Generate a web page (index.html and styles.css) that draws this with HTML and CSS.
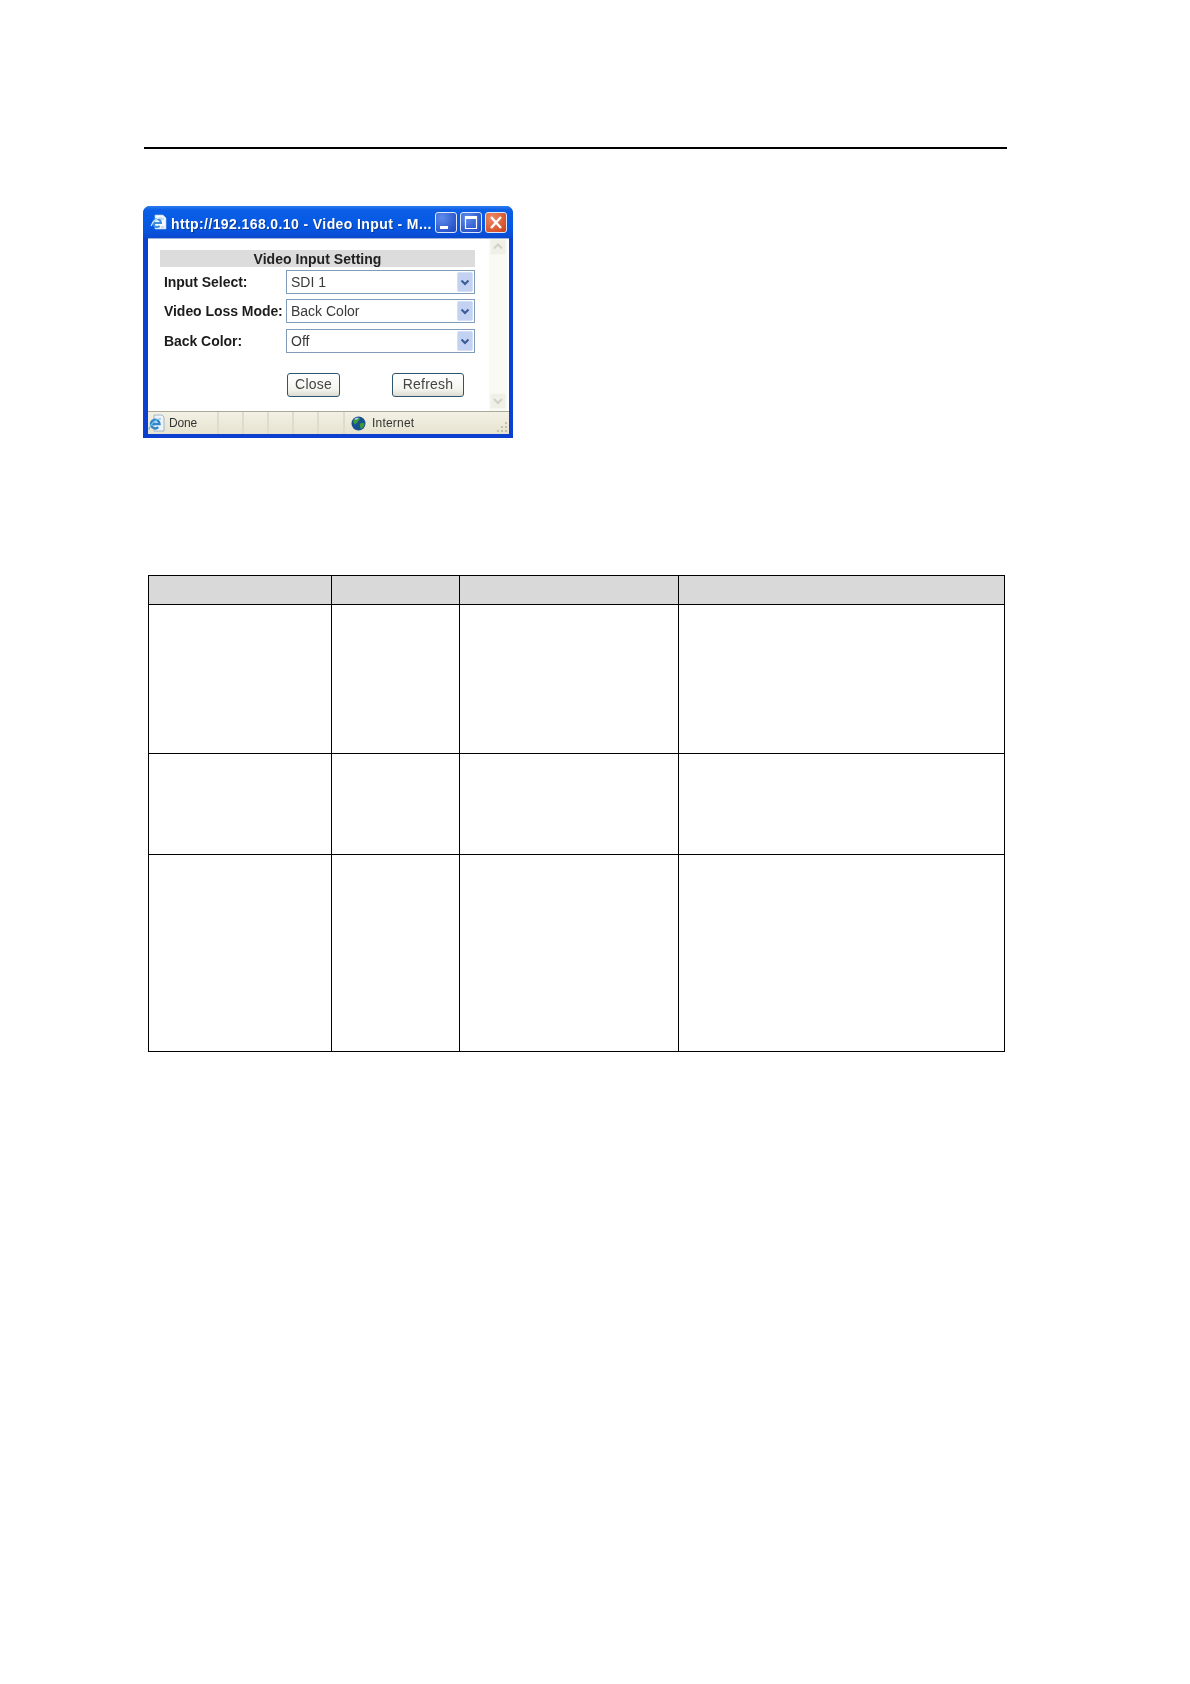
FILE: index.html
```html
<!DOCTYPE html>
<html lang="en">
<head>
<meta charset="utf-8">
<title>Video Input</title>
<link rel="stylesheet" href="styles.css">
</head>
<body>
<main class="page">
  <div class="rule"></div>
  <section class="window">
    <header class="titlebar">
      <svg class="title-icon" viewBox="0 0 17 17" width="17" height="17">
        <path d="M5 1h8l3 3v11H5z" fill="#f4f8ff" stroke="#b9cdea" stroke-width=".6"/>
        <path d="M10 5h4M11 13h3" stroke="#9db8dc" stroke-width="1"/>
        <path d="M3.500 9h7.500a4 4 0 1 0-1.300 3" fill="none" stroke="#3d8fe0" stroke-width="2"/>
        <path d="M1 12C3 6.500 9 2.500 12.500 3.500" fill="none" stroke="#cfe8fb" stroke-width="1.200"/>
      </svg>
      <span class="title-text">http://192.168.0.10 - Video Input - M...</span>
      <div class="caption-buttons">
        <div class="cap cap-min"><svg viewBox="0 0 22 21" width="22" height="21"><rect x="5" y="14" width="8" height="3" fill="#fff"/></svg></div>
        <div class="cap cap-max"><svg viewBox="0 0 22 21" width="22" height="21"><path d="M5.500 4.500h11v12h-11z" fill="none" stroke="#fff" stroke-width="1.200"/><rect x="5" y="4" width="12" height="3" fill="#fff"/></svg></div>
        <div class="cap cap-close"><svg viewBox="0 0 22 21" width="22" height="21"><path d="M6 5l10 11M16 5L6 16" stroke="#fff" stroke-width="2.400"/></svg></div>
      </div>
    </header>
    <div class="client">
      <div class="form">
        <h1 class="form-title">Video Input Setting</h1>
        <div class="field">
          <span class="label">Input Select:</span>
          <div class="select"><span>SDI 1</span><span class="arrow"><svg viewBox="0 0 16 19" width="16" height="19"><path d="M4.500 7.500L8 11l3.500-3.500" fill="none" stroke="#3c5a96" stroke-width="2"/></svg></span></div>
        </div>
        <div class="field">
          <span class="label">Video Loss Mode:</span>
          <div class="select"><span>Back Color</span><span class="arrow"><svg viewBox="0 0 16 19" width="16" height="19"><path d="M4.500 7.500L8 11l3.500-3.500" fill="none" stroke="#3c5a96" stroke-width="2"/></svg></span></div>
        </div>
        <div class="field">
          <span class="label">Back Color:</span>
          <div class="select"><span>Off</span><span class="arrow"><svg viewBox="0 0 16 19" width="16" height="19"><path d="M4.500 7.500L8 11l3.500-3.500" fill="none" stroke="#3c5a96" stroke-width="2"/></svg></span></div>
        </div>
        <div class="actions">
          <div class="btn btn-close">Close</div>
          <div class="btn btn-refresh">Refresh</div>
        </div>
      </div>
      <div class="scrollbar">
        <div class="scroll-btn"><svg viewBox="0 0 16 16" width="16" height="16"><path d="M4 9.500l4-4 4 4" fill="none" stroke="#cfd2c4" stroke-width="2"/></svg></div>
        <div class="scroll-btn"><svg viewBox="0 0 16 16" width="16" height="16"><path d="M4 6l4 4 4-4" fill="none" stroke="#cfd2c4" stroke-width="2"/></svg></div>
      </div>
    </div>
    <footer class="statusbar">
      <div class="status-cell status-main">
        <svg viewBox="0 0 17 19" width="17" height="19">
          <path d="M6 1h8l2 2v14H6z" fill="#eef3f8" stroke="#8fa6c0" stroke-width=".8"/>
          <path d="M3 10h8.500a4.300 4.300 0 1 0-1.300 3.200" fill="none" stroke="#2f86c8" stroke-width="2.400"/>
          <path d="M.8 15.500C3 9 9 4 13 5" fill="none" stroke="#70bde8" stroke-width="1.200"/>
        </svg>
        <span>Done</span>
      </div>
      <div class="status-cell status-small"></div>
      <div class="status-cell status-small"></div>
      <div class="status-cell status-small"></div>
      <div class="status-cell status-small"></div>
      <div class="status-cell status-small status-last"></div>
      <div class="status-cell status-zone">
        <svg viewBox="0 0 15 15" width="15" height="15">
          <circle cx="7.500" cy="7.500" r="7" fill="#16508f"/>
          <path d="M3 3.500c2-1.500 5-2 6-1 .5 1-1.500 1.500-2 3-.6 1.600-2 1.400-2.500 3C3.500 8.500 1.500 6 3 3.500zM9 7.500c1.500-.8 4-.8 4.500 0 0 2.500-2 5-3.500 5.500-1-1-.5-2-1-3-.5-1 0-2 0-2.500z" fill="#3f9a3a"/>
          <path d="M3 3l3-1.500 2 .5-3 2z" fill="#a8d6f5"/>
        </svg>
        <span>Internet</span>
      </div>
      <div class="status-grip">
        <svg viewBox="0 0 13 13" width="13" height="13" fill="#c4c0aa"><rect x="9" y="1" width="2" height="2"/><rect x="5" y="5" width="2" height="2"/><rect x="9" y="5" width="2" height="2"/><rect x="1" y="9" width="2" height="2"/><rect x="5" y="9" width="2" height="2"/><rect x="9" y="9" width="2" height="2"/></svg>
      </div>
    </footer>
  </section>
  <table class="spec">
    <colgroup>
      <col class="c1"><col class="c2"><col class="c3"><col class="c4">
    </colgroup>
    <tr class="row-head"><th></th><th></th><th></th><th></th></tr>
    <tr class="row-a"><td></td><td></td><td></td><td></td></tr>
    <tr class="row-b"><td></td><td></td><td></td><td></td></tr>
    <tr class="row-c"><td></td><td></td><td></td><td></td></tr>
  </table>
</main>
</body>
</html>
```
FILE: styles.css
```css
* { box-sizing: border-box; }
html, body { margin: 0; padding: 0; background: #fff; }
.page { width: 1190px; height: 1684px; padding: 147px 0 0 144px; overflow: hidden; }
.rule { width: 863px; height: 2px; background: #000; }

.window {
  width: 370px; height: 232px; margin: 57px 0 0 -1px;
  display: flex; flex-direction: column;
  background: #0a3fd0;
  border-radius: 7px 7px 0 0;
  font-family: "Liberation Sans", Arial, sans-serif;
  filter: blur(.35px);
  overflow: hidden;
}
.titlebar {
  height: 32px; flex: none; display: flex; align-items: center;
  padding: 0 6px 0 7px; gap: 4px;
  background: linear-gradient(#2f7df0 0, #0a5fe6 4px, #0557e2 22px, #0a4fd8 28px, #0a49cf 32px);
}
.title-icon { flex: none; }
.title-text {
  flex: 1; min-width: 0; margin-top: 3px; color: #fff; font-weight: 700; font-size: 14px; letter-spacing: .4px;
  white-space: nowrap; text-shadow: 1px 1px 0 #0a3a9c;
}
.caption-buttons { display: flex; gap: 3px; margin-top: 1px; flex: none; }
.cap { width: 22px; height: 21px; border: 1px solid #dfe8fa; border-radius: 3px; overflow: hidden; }
.cap svg { display: block; margin: -1px; }
.cap-min, .cap-max { background: radial-gradient(circle at 30% 25%, #5f8cec, #2a55cc 75%, #2448b8); }
.cap-close { background: radial-gradient(circle at 30% 25%, #ec8a66, #d8562e 70%, #c33f1c); }

.client {
  flex: 1; min-height: 0; display: flex; justify-content: space-between;
  margin: 0 4px 0 5px; background: #fff;
  border-top: 1px solid #9db4dc;
}
.form { width: 327px; padding: 11px 0 0 12px; }
.form-title {
  margin: 0 0 3px; height: 17px; background: #dcdcdc; width: 315px;
  font-size: 14px; line-height: 18px; font-weight: 700; text-align: center;
  color: #222; letter-spacing: .03px;
}
.field { display: flex; align-items: center; height: 24px; width: 315px; }
.field + .field { margin-top: 5px; }
.field + .field + .field { margin-top: 6px; }
.label { width: 126px; padding-left: 4px; font-size: 14px; font-weight: 700; color: #1c1c1c; letter-spacing: -.05px; white-space: nowrap; }
.select {
  width: 189px; height: 24px; border: 1px solid #7f9db9; background: #fff;
  display: flex; align-items: center; justify-content: space-between;
  padding: 0 1px 0 4px; font-size: 14px; color: #3a3a3a;
}
.arrow {
  width: 16px; height: 20px; background: #c3d1f2; border: 1px solid #d4def5; border-radius: 2px;
  display: flex; align-items: center; justify-content: center;
}
.arrow svg { display: block; flex: none; }
.actions { display: flex; margin: 20px 0 0 127px; }
.btn {
  height: 24px; border: 1px solid #2f5470; border-radius: 3px;
  background: linear-gradient(#fff, #f4f4ee 70%, #dcdcd0);
  font-size: 14px; line-height: 21px; text-align: center; color: #444; letter-spacing: .2px;
}
.btn-close { width: 53px; }
.btn-refresh { width: 72px; margin-left: 52px; }

.scrollbar {
  width: 18px; margin-right: 2px; background: #fafaf5;
  display: flex; flex-direction: column; justify-content: space-between;
  padding: 0 1px 2px 1px;
}
.scroll-btn { height: 16px; background: #eff0e7; border: 1px solid #f6f6f0; }
.scroll-btn svg { display: block; margin: -1px; }

.statusbar {
  height: 23px; flex: none; margin: 0 4px 4px 5px; display: flex; align-items: center;
  background: linear-gradient(#f3f1e4, #e6e3d0); border-top: 1px solid #aca899;
  font-size: 12px; color: #333;
}
.status-cell { height: 100%; border-right: 2px solid #e0dccb; display: flex; align-items: center; }
.status-main { width: 71px; gap: 4px; letter-spacing: -.2px; }
.status-small { width: 25px; }
.status-last { width: 26px; }
.status-zone { flex: 1; border-right: 0; gap: 6px; padding-left: 6px; letter-spacing: .2px; }
.status-grip { width: 13px; height: 13px; align-self: flex-end; }
.status-grip svg { display: block; }

.spec {
  border-collapse: collapse; table-layout: fixed; width: 856px;
  margin: 137px 0 0 4px;
}
.spec th, .spec td { border: 1.500px solid #000; padding: 0; }
.spec th { background: #d9d9d9; }
.c1 { width: 183px; }
.c2 { width: 128px; }
.c3 { width: 219px; }
.c4 { width: 326px; }
.row-head { height: 29px; }
.row-a { height: 149px; }
.row-b { height: 101px; }
.row-c { height: 197px; }
```
